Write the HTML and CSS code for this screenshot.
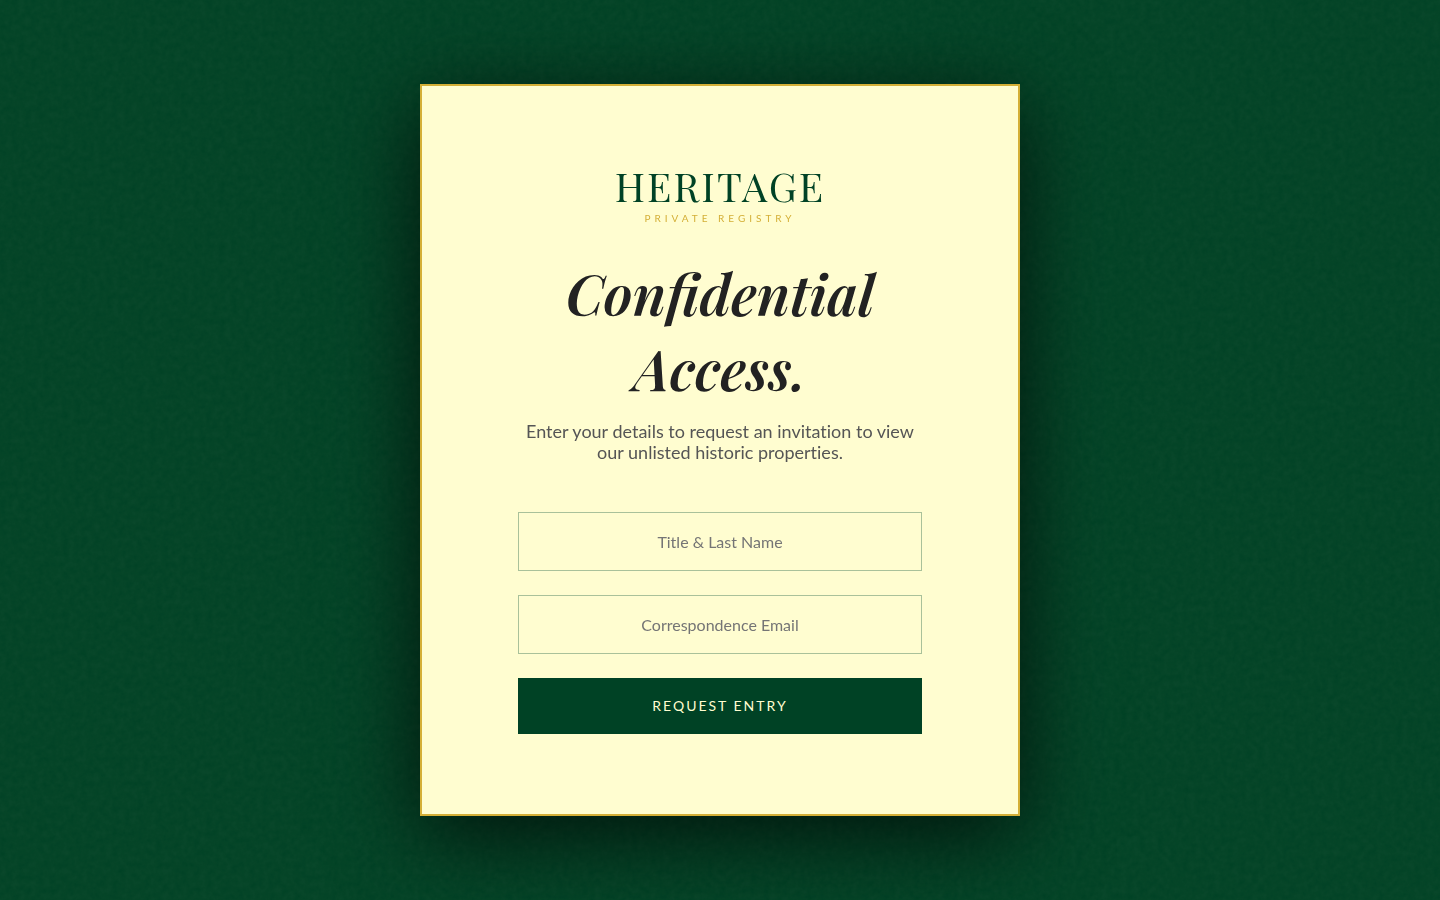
FILE: index.html
```html
<!DOCTYPE html>
<html lang="en">
<head>
  <meta charset="UTF-8">
  <meta name="viewport" content="width=device-width, initial-scale=1.0">
  <title>Heritage | Private Registry</title>
  <link rel="stylesheet" href="styles.css">
</head>
<body>

  <!-- leather grain -->
  <svg class="texture" aria-hidden="true">
    <filter id="grain" x="0" y="0" width="100%" height="100%">
      <feTurbulence type="fractalNoise" baseFrequency="0.16" numOctaves="4" seed="4" stitchTiles="stitch"/>
      <feColorMatrix type="matrix" values="0 0 0 0 0.35  0 0 0 0 0.4  0 0 0 0 0.25  0.07 0 0 0 -0.005"/>
    </filter>
    <rect width="100%" height="100%" filter="url(#grain)"/>
  </svg>

  <main class="card">
    <div class="logo">HERITAGE</div>
    <div class="tagline">Private Registry</div>
    <h1>Confidential Access.</h1>
    <p class="intro">Enter your details to request an invitation to view our unlisted historic properties.</p>
    <form class="form">
      <input type="text" name="name" placeholder="Title &amp; Last Name" aria-label="Title &amp; Last Name">
      <input type="email" name="email" placeholder="Correspondence Email" aria-label="Correspondence Email">
      <button type="button">Request Entry</button>
    </form>
  </main>

</body>
</html>
```
FILE: styles.css
```css
* {
  box-sizing: border-box;
}

body {
  margin: 0;
  min-height: 100vh;
  display: flex;
  align-items: center;
  justify-content: center;
  background-color: #004225;
  font-family: Lato, sans-serif;
  font-variant-ligatures: no-common-ligatures;
  color: #222;
}

.texture {
  position: fixed;
  inset: 0;
  width: 100%;
  height: 100%;
}

.card {
  position: relative;
  width: 100%;
  max-width: 600px;
  padding: 80px 96px;
  border: 2px solid #d4af37;
  background: #fffdd0;
  text-align: center;
  box-shadow: 0 20px 80px rgba(0, 0, 0, 0.7);
}

.logo {
  font-family: "Playfair Display", "Liberation Serif", serif;
  font-size: 40px;
  line-height: 40px;
  letter-spacing: 2px;
  color: #004225;
}

.tagline {
  margin: 4px 0 29px;
  font-size: 10px;
  line-height: 16px;
  letter-spacing: 4px;
  text-transform: uppercase;
  color: #d4af37;
}

h1 {
  margin: 0 0 16px;
  font-family: "Playfair Display", "Liberation Serif", serif;
  font-size: 56px;
  font-weight: 600;
  font-style: italic;
  font-variant-ligatures: normal;
  line-height: 75px;
}

.intro {
  margin: 0 0 49px;
  font-size: 18px;
  line-height: 21px;
  color: #555;
}

.form {
  display: flex;
  flex-direction: column;
  gap: 24px;
}

.form input {
  width: 100%;
  padding: 19px;
  border: 1px solid #a9c19a;
  border-radius: 0;
  background: transparent;
  font-family: inherit;
  font-size: 16px;
  text-align: center;
}

.form input::placeholder {
  color: #757575;
}

.form button {
  padding: 19px;
  border: none;
  background: #004225;
  color: #fffdd0;
  font-family: inherit;
  font-size: 14px;
  line-height: 18px;
  letter-spacing: 2px;
  text-transform: uppercase;
  cursor: pointer;
}
```
